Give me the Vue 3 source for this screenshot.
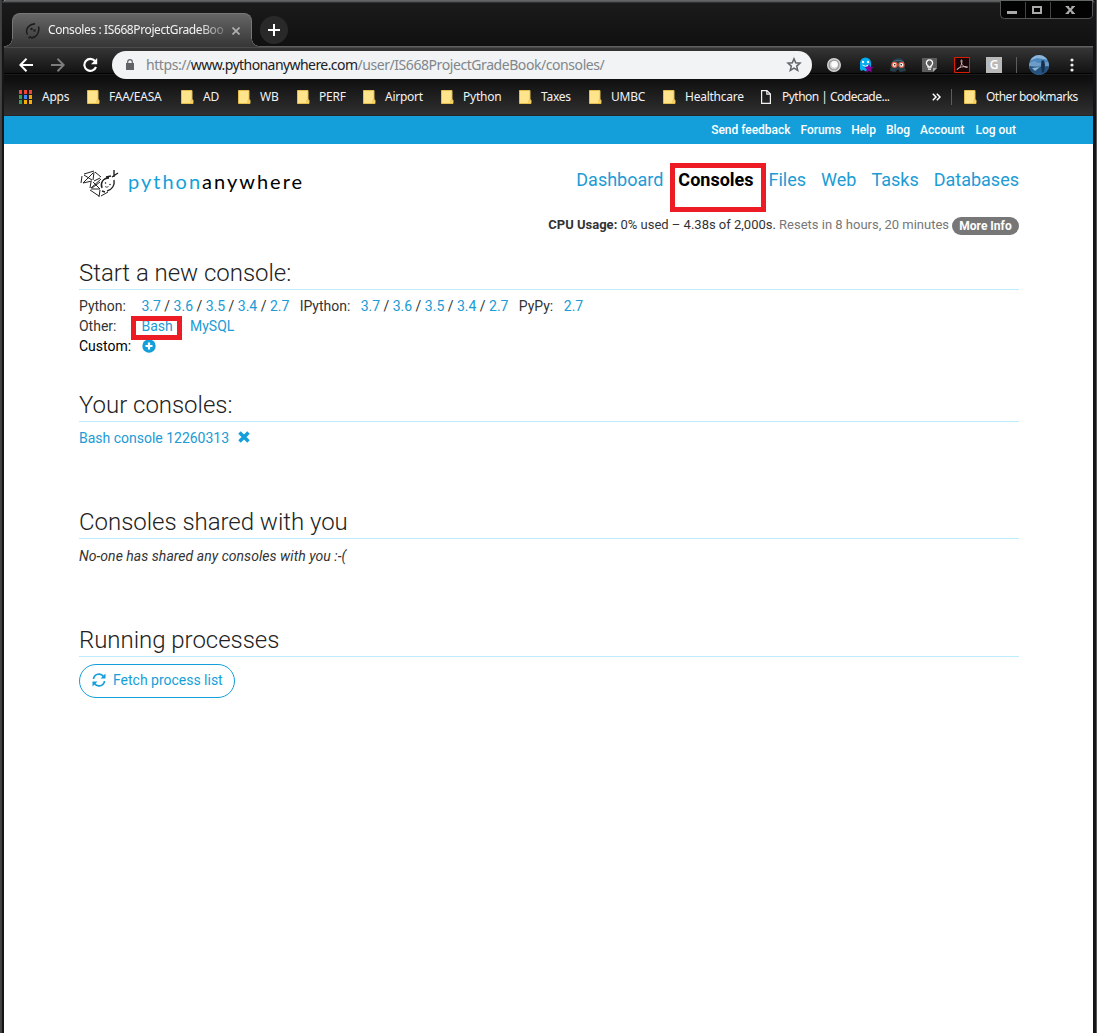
<script setup>
const bookmarks = ['FAA/EASA', 'AD', 'WB', 'PERF', 'Airport', 'Python', 'Taxes', 'UMBC', 'Healthcare']
const appColors = ['#f44336', '#f44336', '#f44336', '#34a058', '#4285f4', '#f4a60a', '#34a058', '#fbac05', '#fbac05']
const account = ['Send feedback', 'Forums', 'Help', 'Blog', 'Account', 'Log out']
const nav = ['Dashboard', 'Consoles', 'Files', 'Web', 'Tasks', 'Databases']
const versions = ['3.7', '3.6', '3.5', '3.4', '2.7']
</script>

<template>
  <div class="window">
    <div class="titlebar">
      <div class="tab">
        <svg class="favicon" width="16" height="18" viewBox="0 0 16 18" fill="none" stroke="#1c1c1c" stroke-width="1.500">
          <path d="M2.500 12.500C0 8 3 3 8.500 2M6 16c5 0 9-5 7.500-11.500M3.500 16l2.500-1.500M8 2.500l2-1" />
          <circle cx="6.500" cy="7" r=".5" /><circle cx="9.500" cy="8.500" r=".5" />
        </svg>
        <span class="tab-title">Consoles : IS668ProjectGradeBoo</span>
        <svg class="tab-close" width="8" height="8" viewBox="0 0 8 8" stroke="#b0b0b0" stroke-width="1.700"><path d="M.5.5l7 7M7.5.5l-7 7" /></svg>
      </div>
      <div class="newtab"><svg width="12" height="12" viewBox="0 0 12 12" stroke="#fff" stroke-width="2"><path d="M6 0v12M0 6h12" /></svg></div>
      <div class="controls">
        <svg width="93" height="18" viewBox="0 0 93 18" fill="none">
          <path d="M.5 0v14q0 3.500 4 3.500H88q4.500 0 4.500-3.500V0" fill="#020202" stroke="#555" />
          <path d="M25.500 1v16M50.500 1v16" stroke="#444" />
          <path d="M7 11.500h10" stroke="#aaa" stroke-width="3" />
          <path d="M33 6h8v6h-8z" stroke="#aaa" stroke-width="2" />
          <path d="M67 5.500l6.500 7M73.500 5.500l-6.500 7" stroke="#aaa" stroke-width="2.200" />
          <path d="M65.500 5.500h3.500M71.500 5.500H75M65.500 12.500h3.500M71.500 12.500H75" stroke="#aaa" />
        </svg>
      </div>
    </div>

    <div class="chrome">
      <div class="toolbar">
        <div class="navicons">
          <svg width="14" height="14" viewBox="0 0 14 14" fill="none" stroke="#fff" stroke-width="2"><path d="M14 7H1.500M7.500.8L1.300 7l6.200 6.200" /></svg>
          <svg width="14" height="14" viewBox="0 0 14 14" fill="none" stroke="#7d7d7d" stroke-width="2"><path d="M0 7h12.500M6.500.8L12.700 7l-6.200 6.200" /></svg>
          <svg width="16" height="16" viewBox="0 0 16 16" fill="none" stroke="#fff" stroke-width="2.100"><path d="M12 4A6 6 0 1 0 13 10" /><path d="M14.200 1v6.200H8z" fill="#fff" stroke="none" /></svg>
        </div>
        <div class="omnibox">
          <svg class="lock" width="8" height="11" viewBox="0 0 8 11"><path d="M0 4h8v7H0z" fill="#5f6368" /><path d="M1.700 5V3a2.300 2.300 0 0 1 4.600 0v2" fill="none" stroke="#5f6368" stroke-width="1.200" /></svg>
          <span class="url">https://<b>www.pythonanywhere.com</b>/user/IS668ProjectGradeBook/consoles/</span>
          <svg class="star" width="16" height="15" viewBox="0 0 16 15" fill="none" stroke="#5f6368" stroke-width="1.500"><path d="M8 1.800l1.700 4 4.300.4-3.300 2.900 1 4.300L8 11.100l-3.700 2.300 1-4.300L2 6.200l4.300-.4z" /></svg>
        </div>
        <div class="exts">
          <svg width="16" height="16" viewBox="0 0 16 16"><circle cx="8" cy="8" r="6.300" fill="#9c9c9c" stroke="#d4d4d4" stroke-width="1.400" /><circle cx="8" cy="8" r="4.200" fill="#d2d2d2" /><circle cx="8.500" cy="7.300" r="3.200" fill="#fcfcfc" /></svg>
          <svg width="16" height="16" viewBox="0 0 16 16"><path d="M2 12V6a5.500 5.500 0 0 1 11 0v7l-2 1-1.500-1-2 1.500L5.500 13 3 14z" fill="#00aef0" /><circle cx="5" cy="5" r="1.200" fill="#fff" /><circle cx="10" cy="5" r="1.200" fill="#fff" /><path d="M4.500 8q3 2.700 6 0" fill="none" stroke="#fff" /><path d="M11 7l1.300 2.700 3.200.3-2.400 2.200.8 3.300-2.900-1.700-2.900 1.700.7-3.300L6.500 10l3.200-.3z" fill="#8a009b" /></svg>
          <svg width="16" height="16" viewBox="0 0 16 16"><path d="M1 8Q2 1 9 1q5 0 5 7l2 6-6 1-2-3-3 3-5-1z" fill="#263e49" /><path d="M3 5q5-3.500 11 0" fill="none" stroke="#3c7082" /><g fill="#fff" stroke="#e26346" stroke-width="1.300"><circle cx="4.500" cy="7.800" r="2.500" /><circle cx="11.500" cy="7.800" r="2.500" /></g><circle cx="4.800" cy="7.800" r=".8" /><circle cx="11.200" cy="7.800" r=".8" /></svg>
          <svg width="16" height="16" viewBox="0 0 16 16"><path d="M0 1h15v10l-4 4H0z" fill="#5d5d5d" /><path d="M11 15v-4h4z" fill="#aaa" /><path d="M6 10V8.700a3.100 3.100 0 1 1 3 0V10zM6 12.200h3" fill="none" stroke="#fff" stroke-width="1.300" /></svg>
          <svg width="16" height="16" viewBox="0 0 16 16" fill="none"><path d="M.500.500h15v15H.500z" fill="#190608" stroke="#d81e05" /><path d="M3 12.500c2-.5 5-4 5-9 0-1-1.200-1-1 .3.300 4 3 6.700 6 6.700 1 0 .8-1-.5-1C9 9.500 6 10 3.500 11.700z" stroke="#d6b9b9" stroke-width=".9" /></svg>
          <div class="gext">G</div>
          <i class="sep"></i>
          <svg class="avatar" width="20" height="20" viewBox="0 0 20 20"><defs><clipPath id="face"><circle cx="10" cy="10" r="10" /></clipPath></defs><g clip-path="url(#face)"><path d="M0 0h20v20H0z" fill="#4b86bd" /><path d="M0 0h20v5L8 3 0 6z" fill="#8db6da" /><path d="M0 8l5-2 5 2 10-1v5L8 11 0 13z" fill="#6f9cc4" /><path d="M0 11l8 1 12-1v9H0z" fill="#26527f" /><path d="M3 13l8-1-5 4z" fill="#8cb5cf" /><path d="M12.500 5.500h2.500l1 4-1 8h-2l-1-7z" fill="#14304e" /></g></svg>
          <svg class="dots" width="4" height="14" viewBox="0 0 4 14" fill="#eee"><circle cx="2" cy="2" r="1.600" /><circle cx="2" cy="7" r="1.600" /><circle cx="2" cy="12" r="1.600" /></svg>
        </div>
      </div>
      <div class="bookmarks">
        <div class="bm">
          <span class="appgrid"><i v-for="(c, i) in appColors" :key="i" :style="{ background: c }"></i></span><span class="name">Apps</span>
        </div>
        <div v-for="b in bookmarks" :key="b" class="bm">
          <svg class="folder" width="13" height="14" viewBox="0 0 13 14"><path d="M.500.500h10.500v9.500h1v3.500H.500z" fill="#ffe48c" stroke="#e4bd4d" /><path d="M10 13.500v-3.500h1.500" fill="none" stroke="#efbf3e" /></svg><span class="name">{{ b }}</span>
        </div>
        <div class="bm code"><svg class="page-ico" width="10" height="14" viewBox="0 0 10 14" fill="none" stroke="#f2f2f2" stroke-width="1.200"><path d="M.600.600H6L9.400 4v9.400H.600zM5.800.6v3.600h3.600" /></svg><span class="name">Python | Codecade...</span></div>
        <div class="bm"><svg width="9" height="8" viewBox="0 0 9 8" fill="none" stroke="#fff" stroke-width="1.500"><path d="M.800.800L4 4 .800 7.200M4.800.800L8 4 4.800 7.200" /></svg></div>
        <div class="bm"><i class="sep"></i></div>
        <div class="bm other"><svg class="folder" width="13" height="14" viewBox="0 0 13 14"><path d="M.500.500h10.500v9.500h1v3.500H.500z" fill="#ffe48c" stroke="#e4bd4d" /><path d="M10 13.500v-3.500h1.500" fill="none" stroke="#efbf3e" /></svg><span class="name">Other bookmarks</span></div>
      </div>
    </div>

    <div class="account"><a v-for="a in account" :key="a">{{ a }}</a></div>

    <main>
      <header>
        <div class="logo">
          <svg width="41" height="31" viewBox="0 0 41 31" fill="none" stroke="#222" stroke-width="1">
            <path d="M4 5l10-3M2 7L1 14M3 14l9-2M4 6l8 5M14 3l-1 8M15 3l6 5M20 9l-6 3M3 14L13 4M11 13l-1 6M13 13l7 7M11 19l10-9M11 20h9M10 21l9 6M20 21l-1 7M21 27l7-4M12 19l8-6" />
            <path d="M22 19c-2-5 1-10 7-10M27 22c5-1 8-6 7-11M32 8l6-4M34 8V1M26 8l5-1M22 22l3 1" stroke-width="1.400" />
            <circle cx="25.500" cy="14" r=".4" /><circle cx="30" cy="15.500" r=".4" /><path d="M25 17.500q2 1.500 3.500 0" stroke-width=".8" />
          </svg>
          <span class="brand"><em>python</em>anywhere</span>
        </div>
        <div class="right">
          <nav>
            <a v-for="n in nav" :key="n" :class="{ current: n === 'Consoles' }">{{ n }}<i v-if="n === 'Consoles'" class="mark"></i></a>
          </nav>
          <div class="cpu"><span class="usage"><b>CPU Usage:</b> 0% used – 4.38s of 2,000s. <span class="reset">Resets in 8 hours, 20 minutes</span></span><span class="badge">More Info</span></div>
        </div>
      </header>

      <section class="start">
        <h2>Start a new console:</h2>
        <div class="row">
          <span class="label">Python:</span>
          <span class="vers"><template v-for="(v, i) in versions" :key="v"><template v-if="i"> / </template><a>{{ v }}</a></template></span>
          <span class="label ipy">IPython:</span>
          <span class="vers"><template v-for="(v, i) in versions" :key="v"><template v-if="i"> / </template><a>{{ v }}</a></template></span>
          <span class="label pypy">PyPy:</span><a>2.7</a>
        </div>
        <div class="row"><span class="label">Other:</span><a class="bash">Bash<i class="mark"></i></a><a>MySQL</a></div>
        <div class="row custom"><span class="label">Custom:</span><svg width="14" height="14" viewBox="0 0 14 14"><circle cx="7" cy="7" r="6.700" fill="#149fda" /><path d="M7 3.500v7M3.500 7h7" stroke="#fff" stroke-width="2.200" /></svg></div>
      </section>

      <section class="yours">
        <h2>Your consoles:</h2>
        <div class="row"><a>Bash console 12260313</a><svg class="kill" width="12" height="12" viewBox="0 0 12 12" stroke="#149fda" stroke-width="3.500"><path d="M1.500 1.500l9 9M10.500 1.500l-9 9" /></svg></div>
      </section>

      <section class="shared">
        <h2>Consoles shared with you</h2>
        <div class="row none">No-one has shared any consoles with you :-(</div>
      </section>

      <section class="running">
        <h2>Running processes</h2>
        <button><svg width="14" height="14" viewBox="0 0 14 14" fill="none" stroke="#149fda" stroke-width="1.700"><path d="M1.500 6A5.500 5.500 0 0 1 11.500 3.500M12.500 8A5.500 5.500 0 0 1 2.500 10.500" /><path d="M13.500.500v5H8.500zM.500 13.500v-5h5z" fill="#149fda" stroke="none" /></svg>Fetch process list</button>
      </section>
    </main>
  </div>
</template>

<style>
body { margin: 0; background: #fff; overflow: hidden; }
</style>

<style scoped>
* { box-sizing: border-box; }
.window { width: 1097px; height: 1033px; padding: 0 4px; background: linear-gradient(90deg, #45464a 0, #3b3a38 2px, #171614 2px, #171614 4px, #fff 4px, #fff 1093px, #141414 1093px, #141414 1096px, #55585a 1096px); font: 14px/20px Roboto, sans-serif; color: #333; overflow: hidden; }
.titlebar { height: 46px; margin: 0 -2px 0 -2px; padding: 13px 2px 0 10px; background: linear-gradient(#626566 0, #626566 1px, #48494a 2px, #1b1b1b 3px, #101010 100%); display: flex; align-items: flex-start; border-radius: 4px 4px 0 0; }
.tab { width: 240px; height: 34px; flex: none; background: linear-gradient(#666, #383838 95%); border: 1px solid #777; border-bottom: 0; border-radius: 8px 8px 0 0; display: flex; align-items: center; padding: 0 11px 0 12px; position: relative; z-index: 1; }
.tab::before, .tab::after { content: ''; position: absolute; bottom: 0; width: 8px; height: 8px; }
.tab::before { left: -8px; background: radial-gradient(circle at 0 0, transparent 6.500px, #666 7px, #383838 8px); }
.tab::after { right: -8px; background: radial-gradient(circle at 100% 0, transparent 6.500px, #666 7px, #383838 8px); }
.favicon { flex: none; }
.tab-title { font: 12px/20px "Noto Sans", sans-serif; color: #f2f2f2; width: 176px; margin: -2px 8px 0 7px; white-space: nowrap; letter-spacing: -.39px; -webkit-mask-image: linear-gradient(90deg, #000 86%, rgba(0,0,0,.25)); mask-image: linear-gradient(90deg, #000 86%, rgba(0,0,0,.25)); }
.tab-close { flex: none; }
.newtab { width: 28px; height: 28px; margin: 3px 0 0 8px; border-radius: 50%; background: #292929; display: flex; align-items: center; justify-content: center; }
.controls { margin: -12px 0 0 auto; height: 18px; }
.controls svg { display: block; }
.chrome { height: 70px; background: linear-gradient(#606060 0, #606060 1px, #353535 2px, #121212 27px, #020202 27px, #020202 28px, #2a2a2a 28px, #0d0d0d 29px, #111 35px, #303030 69px, #1d1d1d 70px); }
.toolbar { height: 33px; display: flex; align-items: center; padding-top: 5px; }
.navicons { width: 108px; padding-left: 15px; display: flex; align-items: center; gap: 18px; }
.omnibox { width: 700px; height: 28px; border-radius: 14px; background: #f1f3f4; display: flex; align-items: center; padding: 0 10px 0 14px; }
.lock { margin-top: -1px; }
.url { font: 14px/20px "Noto Sans", sans-serif; color: #80868b; margin-left: 12px; flex: 1; letter-spacing: -.43px; white-space: nowrap; }
.url b { font-weight: 400; color: #202124; letter-spacing: -.57px; }
.star { margin-top: -1px; }
.exts { flex: 1; display: grid; grid-template-columns: 32px 32px 32px 32px 32px 30px 13px 40.500px 20px; align-items: center; padding-left: 14px; }
.gext { width: 16px; height: 16px; background: #b9b9b9; color: #fff; font: 600 12px/16px "Open Sans", sans-serif; text-align: center; }
.sep { display: block; width: 1px; height: 16px; background: #5d5d5d; }
.bookmarks { height: 36px; display: grid; grid-template-columns: 68px 94px 57px 59px 66px 78px 78px 70px 74px 98px 171px 19px 13px auto; padding: 0 0 1px 15px; align-items: center; font: 12px/20px "Noto Sans", sans-serif; letter-spacing: -.25px; color: #f2f2f2; }
.bm { display: flex; align-items: center; white-space: nowrap; }
.code { letter-spacing: -.52px; }
.other { letter-spacing: -.5px; }
.appgrid { width: 13px; height: 14px; display: grid; grid-template-columns: repeat(3, 3px); grid-auto-rows: 4px; gap: 1px 2px; margin-right: 10px; flex: none; }
.folder { margin-right: 9px; flex: none; }
.page-ico { margin-right: 11px; flex: none; }
.account { height: 28px; background: #149fda; display: flex; justify-content: flex-end; gap: 10px; padding-right: 77px; font: 500 12px/28px Roboto, sans-serif; letter-spacing: -.02px; }
main { width: 940px; margin-left: 75px; }
a { color: #209bd5; }
.account a { color: #fff; }
.account a:last-child { margin-left: 1px; }
header { height: 110px; display: flex; justify-content: space-between; }
.logo { display: flex; align-items: flex-start; padding: 25px 0 0 1px; }
.brand { font: 400 20px/26px Lato, sans-serif; letter-spacing: 2px; color: #000; margin: -1px 0 0 7px; }
.brand em { color: #149fda; font-style: normal; }
.right { padding-top: 24px; }
nav { display: flex; justify-content: flex-end; gap: 15px; font-size: 18px; line-height: 24px; letter-spacing: 0; }
nav a { position: relative; }
nav .current { color: #000; font-weight: 700; }
.mark { position: absolute; border: 5px solid #ed1c24; }
nav .mark { left: -8px; top: -5px; width: 96px; height: 49px; }
.cpu { display: flex; justify-content: flex-end; margin-top: 22px; font-size: 13px; line-height: 20px; align-items: center; white-space: nowrap; }
.usage { letter-spacing: -.005px; }
.reset { color: #777; }
.badge { background: #777; color: #fff; font-weight: 700; font-size: 12px; line-height: 18px; height: 18px; width: 67px; text-align: center; border-radius: 9px; margin: 3px 0 0 3px; }
h2 { margin: 0 0 6px; font: 300 24px/26px Roboto, sans-serif; height: 30px; border-bottom: 1px solid #bdecff; color: #222; letter-spacing: -.03px; }
.start { height: 132px; padding-top: 6px; }
.row { display: flex; height: 20px; align-items: center; white-space: nowrap; letter-spacing: -.01px; }
.label { width: 62.500px; flex: none; }
.ipy { width: 61px; margin-left: 10.300px; }
.pypy { width: 45px; margin-left: 10.300px; }
.bash { position: relative; width: 48.500px; }
.bash .mark { left: -10.500px; top: 0; width: 51px; height: 24px; }
.custom { color: #000; }
.yours { height: 117px; padding-top: 6px; }
.kill { margin: -2px 0 0 9px; }
.shared { height: 118px; padding-top: 6px; }
.none { font-style: italic; letter-spacing: .04px; padding-top: 2px; }
.running { padding-top: 6px; }
button { display: flex; align-items: center; width: 156px; height: 34px; border: 1px solid #149fda; border-radius: 17px; background: #fff; color: #149fda; font: 14px/20px Roboto, sans-serif; letter-spacing: -.01px; padding: 0 0 3px 12px; gap: 7px; white-space: nowrap; margin-top: 7px; }
</style>
